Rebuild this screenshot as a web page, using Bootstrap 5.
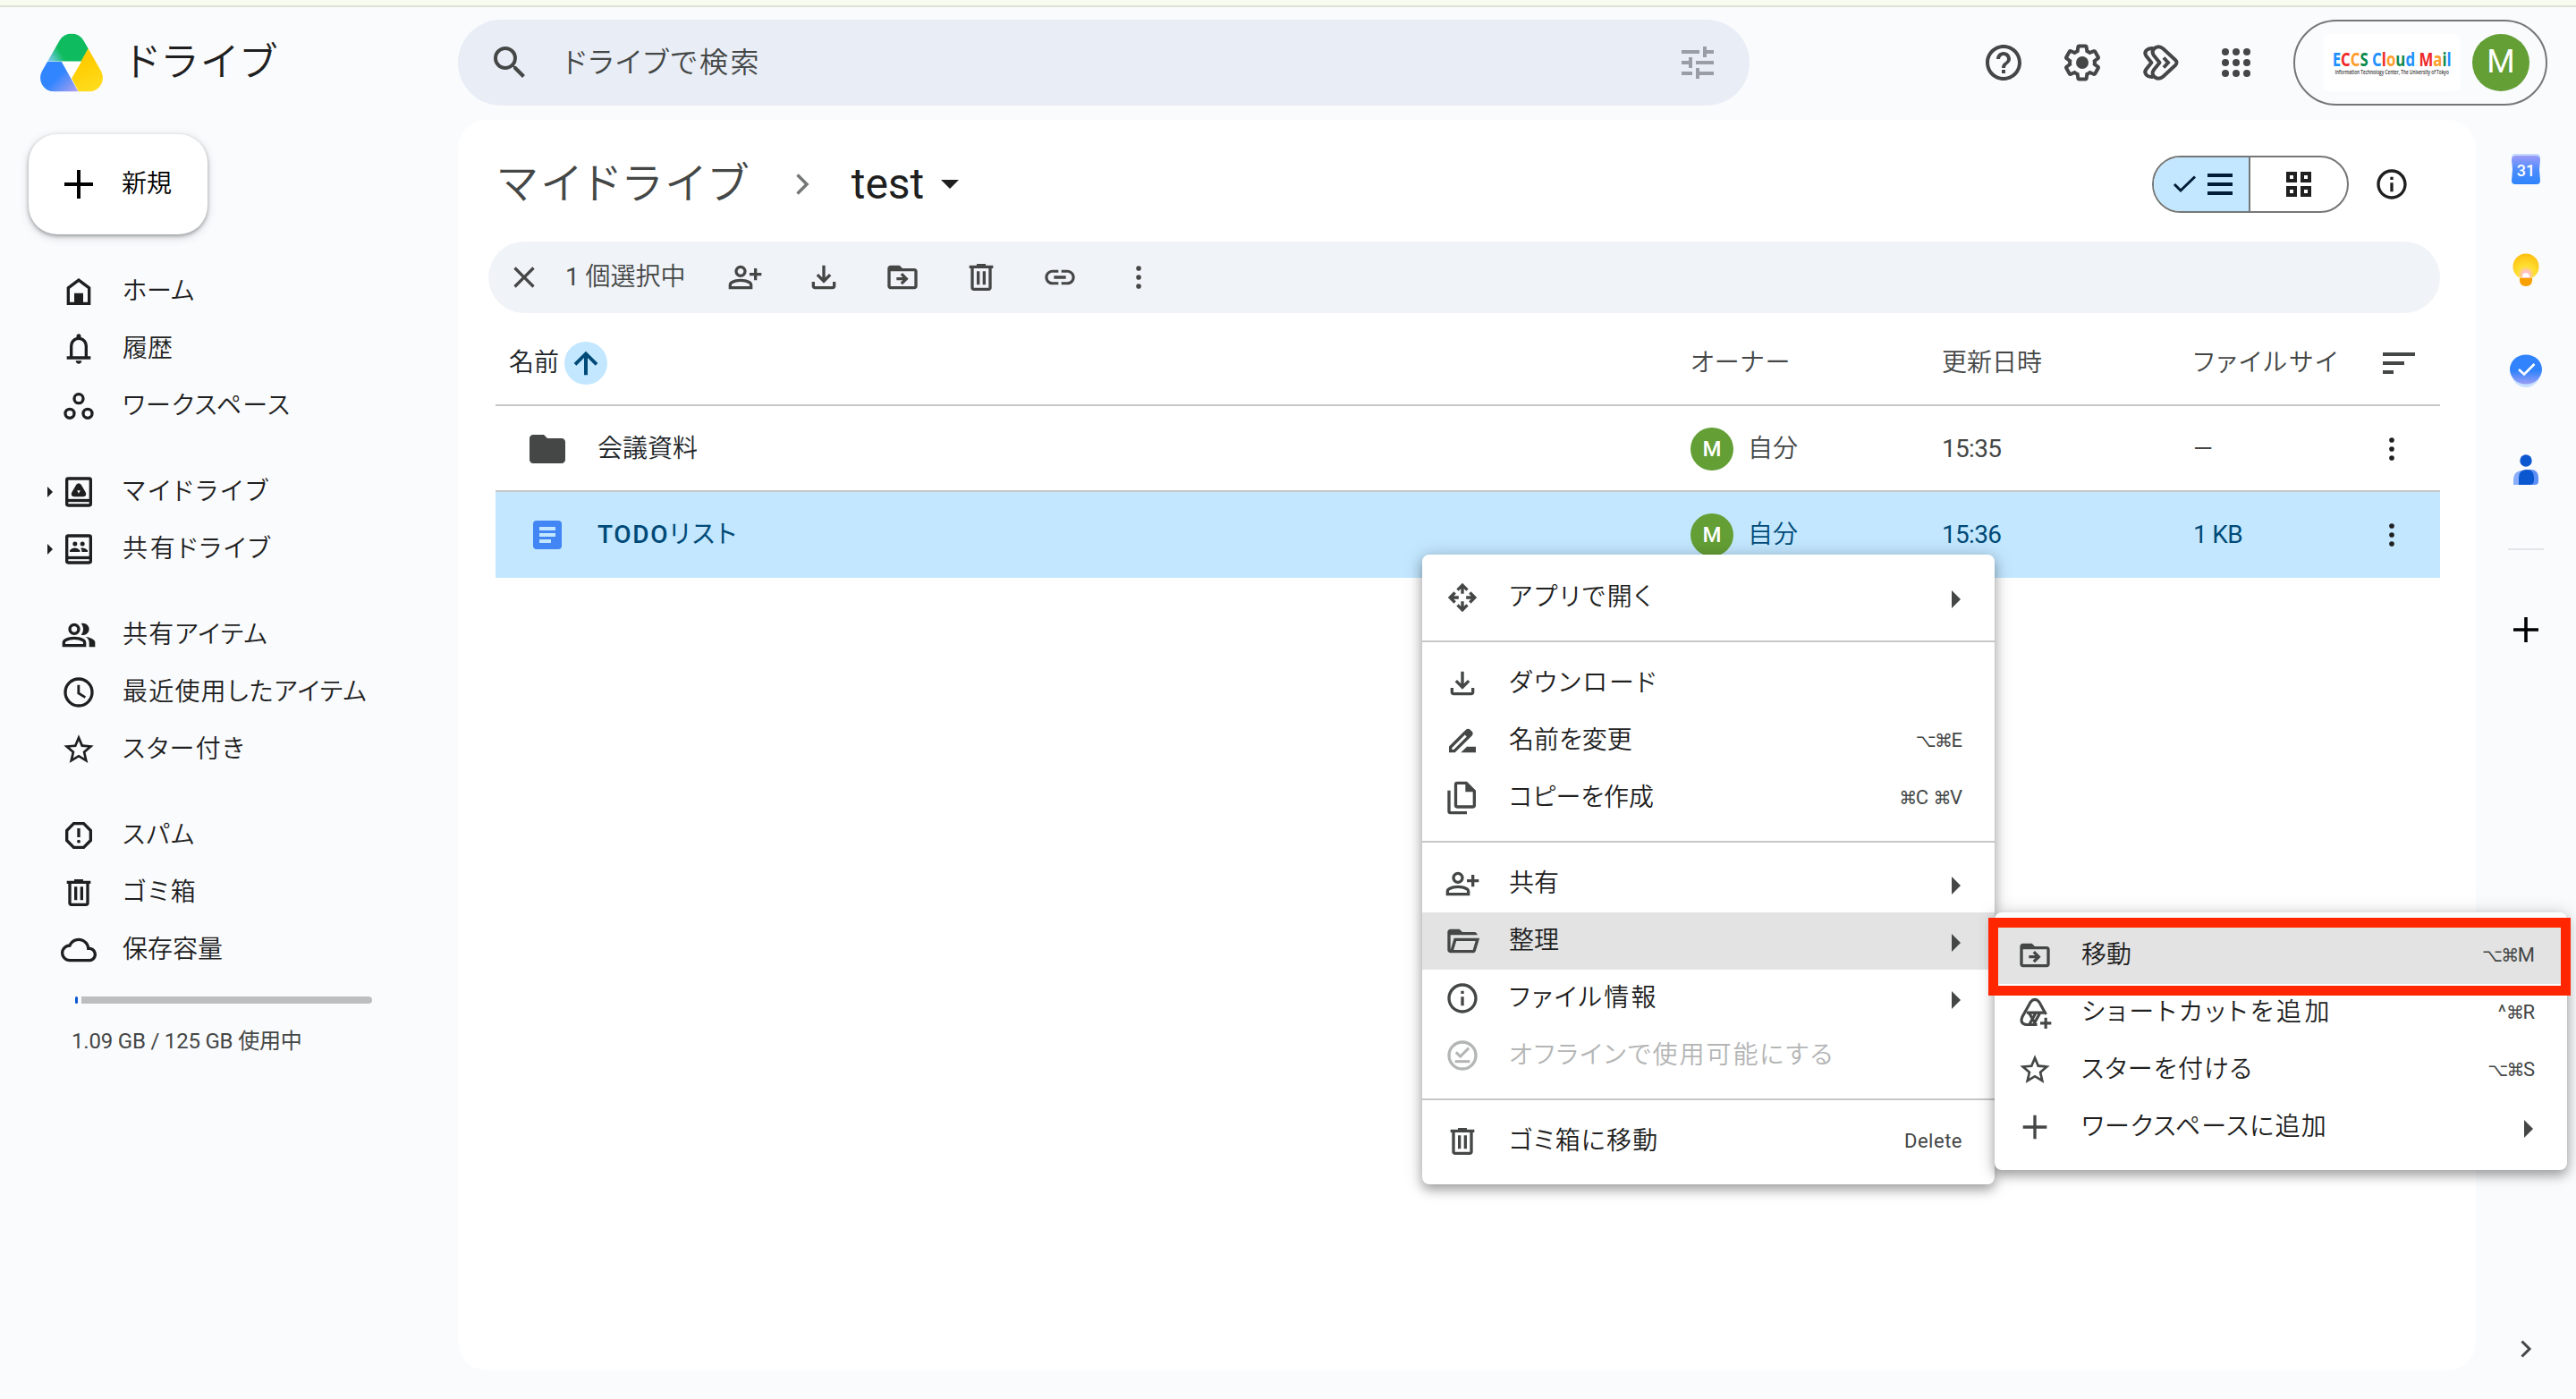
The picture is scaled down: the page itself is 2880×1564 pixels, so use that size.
<!DOCTYPE html>
<html lang="ja">
<head>
<meta charset="utf-8">
<title>test - ドライブ</title>
<link href="https://cdn.jsdelivr.net/npm/bootstrap@5.3.0/dist/css/bootstrap.min.css" rel="stylesheet">
<style>
:root{--ink:#1f1f1f;--sub:#444746;--line:#c7c7c7;--sel:#c2e7ff;--selink:#004a77}
body{width:2880px;height:1564px;overflow:hidden;background:#fafbfd;color:var(--ink);font-family:Roboto,"Noto Sans CJK JP",sans-serif;font-size:28px;line-height:1.2;position:relative}
svg{display:block;flex:none;fill:currentColor}
.i40{width:40px;height:40px}
.i48{width:48px;height:48px}
.kana{font-feature-settings:"palt"}
.jp{font-weight:350;white-space:nowrap}
/* tracking steps for kana runs */
.t1{letter-spacing:.043em}
.t2{letter-spacing:.055em}
.t3{letter-spacing:.082em}
.t4{letter-spacing:.094em}
.t5{letter-spacing:.12em}
.num{letter-spacing:-.7px}
.top-strip{height:8px;background:#f8fbf0;border-bottom:2px solid #dfe3d7}
.app-head{height:124px;margin-bottom:2px}
.brand-box{width:512px;padding-left:45px}
.brand-name{font-size:44px;margin-left:27px}
.search-box{width:1444px;height:96px;border-radius:48px;background:#e9edf6;padding:0 34px;color:var(--sub)}
.search-text{font-size:32px;margin-left:36px}
.search-tune{color:#9a9da3}
.head-icons{margin-left:260px;color:var(--sub);gap:40px}
.head-icons svg:last-child{margin-left:-4px}
.account-pill{width:284px;height:96px;border:2px solid #747775;border-radius:48px;margin-left:40px;padding-right:18px}
.org-logo{width:154px;height:64px;border-radius:8px;background:#fff;margin-right:13px}
.org-name{font:700 21px/20px "Open Sans",sans-serif;white-space:nowrap;transform:scaleX(.8)}
.org-sub{font:600 7px/9px "Open Sans",sans-serif;color:#333;white-space:nowrap;transform:scaleX(.675)}
.c-b{color:#1e90ff}.c-r{color:#f02a2a}.c-o{color:#ff9e2c}.c-g{color:#0c8a4a}
.face{border-radius:50%;background:#639f35;color:#fff;display:flex;align-items:center;justify-content:center;flex:none}
.face-lg{width:64px;height:64px;font-size:36px}
.face-sm{width:48px;height:48px;font-size:24px;font-weight:500}
.side-pane{width:512px;padding-top:16px}
.new-btn{width:200px;height:112px;margin-left:32px;border-radius:32px;background:#fff;border:0;padding-left:32px;box-shadow:0 2px 4px rgba(60,64,67,.45),0 3px 10px 2px rgba(60,64,67,.13)}
.new-btn span{margin-left:24px}
.side-nav{margin-top:32px}
.side-row{height:64px}
.side-row .tip{width:68px;padding-left:53px}
.side-row .lbl{margin-left:29px}
.side-gap{margin-top:32px}
.quota-bar{width:332px;height:8px;margin:20px 0 0 84px;gap:4px}
.quota-used{background:#0b57d0;border-radius:2px}
.quota-free{background:#bdbec0;border-radius:0 4px 4px 0}
.quota-text{margin:28px 0 0 80px;font-size:24px;color:var(--sub);letter-spacing:-.2px}
.main-pane{width:2256px;height:1398px;border-radius:32px;background:#fff;padding-top:8px}
.crumbs{height:128px;padding:0 74px 0 45px}
.crumb-a{font-size:48px;color:var(--sub)}
.crumb-b{font-size:48px}
.view-switch{width:220px;height:64px;border:2px solid #747775;border-radius:32px;overflow:hidden}
.view-on{width:108px;padding-left:3px;background:var(--sel);border-right:2px solid #747775;color:#001d35}
.sel-bar{width:2182px;height:80px;margin-left:34px;border-radius:40px;background:#f0f3f8;color:var(--sub);padding-left:20px}
.files{width:2174px;margin-left:42px}
.f-row{display:grid;grid-template-columns:1336px 281px 281px 162px 1fr;align-items:center;height:96px}
.f-head{height:104px;padding-top:9px;border-bottom:2px solid var(--line);color:var(--sub)}
.f-one{padding-top:2px;border-bottom:2px solid var(--line);color:var(--sub)}
.f-two{background:var(--sel);color:var(--selink)}
.sort-dot{width:48px;height:48px;border-radius:50%;background:var(--sel);color:var(--selink);margin-left:6px}
.rail{width:112px}
.rail-line{width:40px;height:2px;background:#e3e5e8}
.pop{position:absolute;width:640px;background:#fff;border-radius:8px;padding:16px 0;box-shadow:0 6px 12px rgba(0,0,0,.28),0 2px 20px 2px rgba(0,0,0,.16)}
.pop-a{left:1590px;top:620px}
.pop-b{left:2230px;top:1020px}
.pop-row{height:64px;padding:0 36px 0 25px}
.pop-row .lbl{margin-left:32px}
.pop-row svg.i40{color:var(--sub)}
.pop-on{background:#e3e3e3}
.pop-off,.pop-row.pop-off svg.i40{color:#b4b5b5}
.pop-rule{height:2px;background:var(--line);margin:16px 0 14px}
.keys{margin-left:auto;font-size:22px;color:var(--sub);font-family:Roboto,"DejaVu Sans",sans-serif}
.sym{font-size:20px;letter-spacing:-1.5px}
.tri{margin-left:auto;width:10px;height:20px;color:var(--sub);margin-right:2px;margin-top:4px}
.hot{position:absolute;left:2223px;top:1026px;width:651px;height:87px;border:11px solid #ff2600}
</style>
<script src="https://cdn.jsdelivr.net/npm/bootstrap@5.3.0/dist/js/bootstrap.bundle.min.js"></script>
</head>
<body>
<svg width="0" height="0" class="position-absolute">
<defs>
<symbol id="plus" viewBox="0 0 24 24"><path d="M11 4h2v7h7v2h-7v7h-2v-7H4v-2h7z"/></symbol>
<symbol id="home" viewBox="0 0 24 24"><path fill-rule="evenodd" d="M4 21V9l8-6 8 6v12zM6 19h3v-6h6v6h3v-9l-6-4.5L6 10z"/></symbol>
<symbol id="bell" viewBox="0 0 24 24"><path fill-rule="evenodd" d="M4 19v-2h2v-7q0-2.1 1.25-3.7T10.5 4.2v-.7q0-.6.45-1.05T12 2t1.05.45.45 1.05v.7q2 .5 3.25 2.1T18 10v7h2v2zM8 17h8v-7q0-1.65-1.175-2.825T12 6 9.175 7.175 8 10zM12 22q-.8 0-1.4-.6T10 20h4q0 .8-.6 1.4T12 22z"/></symbol>
<symbol id="spaces" viewBox="0 0 24 24"><g fill="none" stroke="currentColor" stroke-width="2"><circle cx="12" cy="7" r="3"/><circle cx="6" cy="17" r="3"/><circle cx="18" cy="17" r="3"/></g></symbol>
<symbol id="mydrive" viewBox="0 0 24 24"><rect x="4" y="3" width="16" height="18" rx="1" fill="none" stroke="currentColor" stroke-width="2"/><path d="M4 16.700h16v2H4z"/><path fill-rule="evenodd" d="M10.400 7q1.600-1.800 3.200 0l3 5.200q1.200 2.700-1.600 2.900H9q-2.800-.2-1.600-2.900zM10.900 11l1.100 2 1.100-2z"/></symbol>
<symbol id="shdrive" viewBox="0 0 24 24"><rect x="4" y="3" width="16" height="18" rx="1" fill="none" stroke="currentColor" stroke-width="2"/><path d="M4 16.700h16v2H4z"/><circle cx="9.500" cy="8.400" r="1.500"/><circle cx="14.500" cy="8.400" r="1.500"/><path d="M6 13.800v-1q1.300-1.700 3.400-1.700t3.400 1.700v1zM14 13.800v-1.300l-.8-1.200q3-.8 4.800 1.500v1z"/></symbol>
<symbol id="people" viewBox="0 0 24 24"><path fill-rule="evenodd" d="M1 20v-2.800q0-.85.44-1.560T2.600 14.550Q4.150 13.775 5.750 13.390T9 13t3.250.39 3.150 1.160q.73.38 1.160 1.090T17 17.200V20zM3 18h12v-.8q0-.275-.137-.5t-.363-.35Q13.150 15.675 11.775 15.337T9 15t-2.775.337T3.500 16.350q-.225.125-.363.350T3 17.200zM9 12q-1.650 0-2.825-1.175T5 8t1.175-2.825T9 4t2.825 1.175T13 8t-1.175 2.825T9 12zM9 10q.825 0 1.413-.587T11 8t-.587-1.413T9 6t-1.413.588T7 8t.588 1.413T9 10z"/><path d="M19 20v-3q0-1.100-.61-2.110T16.650 13.150q1.275.15 2.400.51t2.100.89q.9.5 1.375 1.110T23 17v3zM19 8q0 1.650-1.175 2.825T15 12q-.275 0-.7-.063T13.600 11.800q.675-.8 1.038-1.775T15 8t-.362-2.025T13.600 4.200q.35-.125.7-.163T15 4q1.650 0 2.825 1.175T19 8z"/></symbol>
<symbol id="clock" viewBox="0 0 24 24"><g fill="none" stroke="currentColor" stroke-width="2"><circle cx="12" cy="12" r="9"/><path d="M11.900 7v5.600l4.500 2.800" stroke-width="1.700"/></g></symbol>
<symbol id="star" viewBox="0 0 24 24"><path fill-rule="evenodd" d="M22 9.240l-7.190-.62L12 2 9.190 8.630 2 9.240l5.460 4.730L5.820 21 12 17.270 18.180 21l-1.630-7.030zM12 15.400l-3.760 2.270 1-4.280-3.320-2.880 4.380-.38L12 6.100l1.710 4.040 4.380.38-3.320 2.880 1 4.280z"/></symbol>
<symbol id="spam" viewBox="0 0 24 24"><path fill-rule="evenodd" d="M8.250 21L3 15.750v-7.500L8.250 3h7.500L21 8.250v7.500L15.750 21zM9.100 19h5.800l4.100-4.100V9.100L14.900 5H9.100L5 9.100v5.800z"/><path d="M11 7.200h2v6h-2z"/><circle cx="12" cy="16" r="1.150"/></symbol>
<symbol id="trash" viewBox="0 0 24 24"><path fill-rule="evenodd" d="M7 21q-.825 0-1.412-.587T5 19V6H4V4h5V3h6v1h5v2h-1v13q0 .825-.587 1.413T17 21zM17 6H7v13h10zM9 17h2V8H9zM13 17h2V8h-2z"/></symbol>
<symbol id="cloud" viewBox="0 0 24 24"><path fill-rule="evenodd" d="M19.350 10.040C18.670 6.590 15.640 4 12 4 9.110 4 6.600 5.640 5.350 8.040 2.340 8.360 0 10.910 0 14c0 3.310 2.690 6 6 6h13c2.760 0 5-2.240 5-5 0-2.640-2.050-4.780-4.650-4.960zM19 18H6c-2.210 0-4-1.790-4-4s1.790-4 4-4h.71C7.370 7.690 9.480 6 12 6c3.040 0 5.500 2.460 5.500 5.500v.5H19c1.660 0 3 1.340 3 3s-1.340 3-3 3z"/></symbol>
<symbol id="search" viewBox="0 0 24 24"><path d="M15.500 14h-.79l-.28-.27A6.470 6.470 0 0 0 16 9.500 6.500 6.500 0 1 0 9.500 16c1.610 0 3.090-.59 4.230-1.570l.27.28v.79l5 4.990L20.490 19l-4.990-5zm-6 0C7.010 14 5 11.990 5 9.500S7.010 5 9.500 5 14 7.010 14 9.500 11.990 14 9.500 14z"/></symbol>
<symbol id="tune" viewBox="0 0 24 24"><path d="M3 17v2h6v-2zM3 5v2h10V5zm10 16v-2h8v-2h-8v-2h-2v6zM7 9v2H3v2h4v2h2V9zm14 4v-2H11v2zm-6-4h2V7h4V5h-4V3h-2z"/></symbol>
<symbol id="help" viewBox="0 0 24 24"><path d="M11 18h2v-2h-2v2zm1-16C6.480 2 2 6.480 2 12s4.480 10 10 10 10-4.480 10-10S17.520 2 12 2zm0 18c-4.410 0-8-3.590-8-8s3.590-8 8-8 8 3.590 8 8-3.590 8-8 8zm0-14c-2.210 0-4 1.790-4 4h2c0-1.100.9-2 2-2s2 .9 2 2c0 2-3 1.750-3 5h2c0-2.250 3-2.500 3-5 0-2.210-1.790-4-4-4z"/></symbol>
<symbol id="gear" viewBox="0 0 24 24"><path d="M13.850 22.250h-3.700c-.74 0-1.360-.54-1.450-1.270l-.27-1.890c-.27-.14-.53-.29-.79-.46l-1.800.72c-.7.26-1.470-.03-1.810-.65L2.200 15.530c-.35-.66-.2-1.440.36-1.880l1.530-1.190c-.01-.15-.02-.3-.02-.46 0-.15.01-.31.02-.46l-1.520-1.190c-.59-.45-.74-1.260-.37-1.880l1.850-3.190c.34-.62 1.110-.9 1.790-.63l1.810.73c.26-.17.52-.32.78-.46l.27-1.910c.09-.7.710-1.250 1.440-1.250h3.700c.74 0 1.360.54 1.450 1.270l.27 1.890c.27.14.53.29.79.46l1.800-.72c.71-.26 1.480.03 1.820.65l1.840 3.180c.36.66.2 1.440-.36 1.880l-1.520 1.190c.01.15.02.3.02.46s-.01.31-.02.46l1.520 1.190c.56.45.72 1.230.37 1.860l-1.860 3.220c-.34.62-1.110.9-1.800.63l-1.800-.72c-.26.17-.52.32-.78.46l-.27 1.910c-.1.680-.72 1.220-1.460 1.220zm-3.230-2h2.760l.37-2.550.53-.22c.44-.18.88-.44 1.340-.78l.45-.34 2.380.96 1.380-2.400-2.030-1.580.07-.56c.03-.26.06-.51.06-.78s-.03-.53-.06-.78l-.07-.56 2.030-1.580-1.390-2.400-2.390.96-.45-.35c-.42-.32-.87-.58-1.330-.77l-.52-.22-.37-2.550h-2.760l-.37 2.550-.53.21c-.44.19-.88.44-1.340.79l-.45.33-2.380-.95-1.390 2.390 2.030 1.580-.07.56a7 7 0 0 0-.06.79c0 .26.02.53.06.78l.07.56-2.030 1.580 1.380 2.400 2.390-.96.45.35c.43.33.86.58 1.330.77l.53.22z"/><circle cx="12" cy="12" r="3.500"/></symbol>
<symbol id="flows" viewBox="0 0 48 48"><g fill="none" stroke="currentColor" stroke-width="4" stroke-linejoin="round" stroke-linecap="round"><path d="M26.500 8.500L40 21q3 3 0 6L26.500 39.500q-4.500 4-9 1-5-3.500-1.500-8.500l6.500-8-6.500-8q-3.500-5 1.500-8.500 4.500-3 9 1z"/><path d="M14.500 8q-4-.5-6.700 2.200-2.800 3-.4 6.300l6 7.500-6 7.500q-2.400 3.300.4 6.300 2.700 2.700 6.700 2.200"/><path d="M27 18.500l5 5.500-5 5.500" stroke-linecap="butt" stroke-linejoin="miter"/></g></symbol>
<symbol id="apps" viewBox="0 0 24 24"><circle cx="6" cy="6" r="2"/><circle cx="12" cy="6" r="2"/><circle cx="18" cy="6" r="2"/><circle cx="6" cy="12" r="2"/><circle cx="12" cy="12" r="2"/><circle cx="18" cy="12" r="2"/><circle cx="6" cy="18" r="2"/><circle cx="12" cy="18" r="2"/><circle cx="18" cy="18" r="2"/></symbol>
<symbol id="info" viewBox="0 0 24 24"><path d="M11 7h2v2h-2zm0 4h2v6h-2zm1-9C6.480 2 2 6.480 2 12s4.480 10 10 10 10-4.480 10-10S17.520 2 12 2zm0 18c-4.410 0-8-3.590-8-8s3.590-8 8-8 8 3.590 8 8-3.590 8-8 8z"/></symbol>
<symbol id="close" viewBox="0 0 24 24"><path d="M19 6.410L17.590 5 12 10.590 6.410 5 5 6.410 10.590 12 5 17.590 6.410 19 12 13.410 17.590 19 19 17.590 13.410 12z"/></symbol>
<symbol id="padd" viewBox="0 0 24 24"><path fill-rule="evenodd" d="M1 20v-2.800q0-.85.44-1.560T2.600 14.550Q4.150 13.775 5.750 13.390T9 13t3.250.39 3.150 1.160q.73.38 1.160 1.090T17 17.200V20zM3 18h12v-.8q0-.275-.137-.5t-.363-.35Q13.150 15.675 11.775 15.337T9 15t-2.775.337T3.500 16.350q-.225.125-.363.350T3 17.200zM9 12q-1.650 0-2.825-1.175T5 8t1.175-2.825T9 4t2.825 1.175T13 8t-1.175 2.825T9 12zM9 10q.825 0 1.413-.587T11 8t-.587-1.413T9 6t-1.413.588T7 8t.588 1.413T9 10z"/><path d="M18 14v-3h-3V9h3V6h2v3h3v2h-3v3z"/></symbol>
<symbol id="down" viewBox="0 0 24 24"><path d="M12 16L7 11l1.400-1.450L11 12.150V4h2v8.150l2.600-2.600L17 11zM6 20q-.825 0-1.412-.587T4 18v-3h2v3h12v-3h2v3q0 .825-.587 1.413T18 20z"/></symbol>
<symbol id="fmove" viewBox="0 0 24 24"><path fill-rule="evenodd" d="M20 6h-8l-2-2H4c-1.100 0-2 .9-2 2v12c0 1.100.9 2 2 2h16c1.100 0 2-.9 2-2V8c0-1.100-.9-2-2-2zM20 18H4V8h16z"/><path d="M12 17l4-4-4-4-1.410 1.410L12.170 12H8v2h4.170l-1.590 1.590z"/></symbol>
<symbol id="link" viewBox="0 0 24 24"><path d="M3.900 12c0-1.710 1.390-3.100 3.100-3.100h4V7H7c-2.760 0-5 2.240-5 5s2.240 5 5 5h4v-1.900H7c-1.710 0-3.100-1.390-3.100-3.100zM8 13h8v-2H8v2zm9-6h-4v1.900h4c1.710 0 3.100 1.390 3.100 3.100s-1.390 3.100-3.100 3.100h-4V17h4c2.760 0 5-2.240 5-5s-2.240-5-5-5z"/></symbol>
<symbol id="more" viewBox="0 0 24 24"><circle cx="12" cy="6" r="1.700"/><circle cx="12" cy="12" r="1.700"/><circle cx="12" cy="18" r="1.700"/></symbol>
<symbol id="sort" viewBox="0 0 24 24"><path d="M3 18h6v-2H3zM3 6v2h18V6zm0 7h12v-2H3z"/></symbol>
<symbol id="upar" viewBox="0 0 24 24"><path d="M4 12l1.600 1.600L10.800 8.400V20h2.400V8.400l5.200 5.200L20 12l-8-8z"/></symbol>
<symbol id="folder" viewBox="0 0 24 24"><path d="M10 4H4c-1.100 0-2 .9-2 2v12c0 1.100.9 2 2 2h16c1.100 0 2-.9 2-2V8c0-1.100-.9-2-2-2h-8z"/></symbol>
<symbol id="openw" viewBox="0 0 24 24"><g fill="none" stroke="currentColor" stroke-width="2"><path d="M12 9.500V4M8.700 7L12 3.700 15.300 7M12 14.500V20M8.700 17l3.300 3.300 3.300-3.300M9.500 12H4M7 8.700L3.700 12 7 15.300M14.500 12H20M17 8.700l3.300 3.300-3.300 3.300"/></g></symbol>
<symbol id="rename" viewBox="0 0 24 24"><path fill-rule="evenodd" d="M18.410 5.800L17.200 4.590c-.78-.78-2.050-.78-2.830 0l-2.680 2.680L3 15.960V20h4.040l8.740-8.740 2.630-2.630c.79-.78.79-2.050 0-2.830zM6.210 18H5v-1.210l8.660-8.660 1.210 1.210zM11 20l4-4h6v4z"/></symbol>
<symbol id="copy" viewBox="0 0 24 24"><path fill-rule="evenodd" d="M15 1H8.500a2 2 0 0 0-2 2v14a2 2 0 0 0 2 2H19a2 2 0 0 0 2-2V7zM8.500 17V3H14v5h5v9z"/><path d="M4 7H2v14a2 2 0 0 0 2 2h11v-2H4z"/></symbol>
<symbol id="fopen" viewBox="0 0 24 24"><path fill-rule="evenodd" d="M4 20q-.825 0-1.412-.587T2 18V6q0-.825.588-1.412T4 4h6l2 2h8q.825 0 1.413.588T22 8H4v10l2.400-8h17.100l-2.575 8.575q-.2.650-.737 1.038T19 20zM6.100 18H19l1.800-6H7.900z"/></symbol>
<symbol id="offl" viewBox="0 0 24 24"><g fill="none" stroke="currentColor" stroke-width="2"><circle cx="12" cy="12" r="9"/><path d="M7 16h10" stroke-width="1.800"/><path d="M7.700 9.800l2.900 2.900 5.700-5.700" stroke-width="1.800"/></g></symbol>
<symbol id="shortcut" viewBox="0 0 24 24"><g fill="none" stroke="currentColor" stroke-width="1.900"><path d="M19.500 13.200L14.900 5q-2.900-3.500-5.800 0L3.500 15q-1.700 4.700 2.900 5.100H13.500"/><path d="M6.500 12.100H18M8.200 12.400l4.200 7.300M8.300 20l4.200-7.500M12 18.500l3.200-5.800"/><path d="M19.300 15.500v7.300M15.600 19.100H23"/></g></symbol>
<symbol id="tri" viewBox="0 0 10 20"><path d="M0 0l10 10L0 20z"/></symbol>
</defs>
</svg>

<div class="top-strip"></div>
<header class="app-head d-flex align-items-center">
  <div class="brand-box d-flex align-items-center">
    <svg width="70" height="66" viewBox="45 36.500 70 66">
      <defs>
        <clipPath id="hull"><path d="M66.600 44.750A15.500 15.500 0 0 1 93.400 44.750L112.900 78.750A15.500 15.500 0 0 1 99.500 102H60.500A15.500 15.500 0 0 1 47.100 78.750Z"/></clipPath>
        <linearGradient id="lg" x1="52" y1="68" x2="68" y2="58" gradientUnits="userSpaceOnUse"><stop offset="0" stop-color="#7cc4ff"/><stop offset=".4" stop-color="#5ec6c8"/><stop offset="1" stop-color="#0ebc5f"/></linearGradient>
        <linearGradient id="lb" x1="66" y1="84" x2="84" y2="102" gradientUnits="userSpaceOnUse"><stop offset="0" stop-color="#3186ff"/><stop offset="1" stop-color="#a9a0f0"/></linearGradient>
        <linearGradient id="ly" x1="90" y1="70" x2="104" y2="102" gradientUnits="userSpaceOnUse"><stop offset="0" stop-color="#ffcc00"/><stop offset="1" stop-color="#ffdd1f"/></linearGradient>
      </defs>
      <g clip-path="url(#hull)"><path fill="url(#lg)" d="M40 68h51l9-16V30H60z"/><path fill="url(#lb)" d="M40 68.500h29L88 103H40z"/><path fill="url(#ly)" d="M99 53L80 87l8.500 16H120V53z"/><path fill="#fff" d="M69 68.500h22L80 87z"/></g>
    </svg>
    <span class="brand-name jp kana t5">ドライブ</span>
  </div>
  <div class="search-box d-flex align-items-center">
    <svg class="i48"><use href="#search"/></svg>
    <span class="search-text jp kana t3">ドライブで検索</span>
    <svg class="i48 ms-auto search-tune"><use href="#tune"/></svg>
  </div>
  <div class="head-icons d-flex align-items-center">
    <svg class="i48"><use href="#help"/></svg>
    <svg class="i48"><use href="#gear"/></svg>
    <svg class="i48"><use href="#flows"/></svg>
    <svg class="i48"><use href="#apps"/></svg>
  </div>
  <div class="account-pill d-flex align-items-center justify-content-end">
    <div class="org-logo d-flex flex-column align-items-center justify-content-center">
      <div class="org-name"><span class="c-b">E</span><span class="c-r">C</span><span class="c-o">C</span><span class="c-g">S</span> <span class="c-b">C</span><span class="c-r">l</span><span class="c-o">o</span><span class="c-g">u</span><span class="c-b">d</span> <span class="c-r">M</span><span class="c-o">a</span><span class="c-g">i</span><span class="c-b">l</span></div>
      <div class="org-sub">Information Technology Center, The University of Tokyo</div>
    </div>
    <div class="face face-lg">M</div>
  </div>
</header>

<div class="d-flex">
  <aside class="side-pane">
    <button class="new-btn d-flex align-items-center"><svg class="i48"><use href="#plus"/></svg><span class="jp">新規</span></button>
    <nav class="side-nav">
      <div class="side-row d-flex align-items-center"><span class="tip"></span><svg class="i40"><use href="#home"/></svg><span class="lbl jp kana">ホーム</span></div>
      <div class="side-row d-flex align-items-center"><span class="tip"></span><svg class="i40"><use href="#bell"/></svg><span class="lbl jp">履歴</span></div>
      <div class="side-row d-flex align-items-center"><span class="tip"></span><svg class="i40"><use href="#spaces"/></svg><span class="lbl jp kana t1">ワークスペース</span></div>
      <div class="side-row side-gap d-flex align-items-center"><span class="tip"><svg width="6" height="12"><use href="#tri"/></svg></span><svg class="i40"><use href="#mydrive"/></svg><span class="lbl jp kana t5">マイドライブ</span></div>
      <div class="side-row d-flex align-items-center"><span class="tip"><svg width="6" height="12"><use href="#tri"/></svg></span><svg class="i40"><use href="#shdrive"/></svg><span class="lbl jp kana t4">共有ドライブ</span></div>
      <div class="side-row side-gap d-flex align-items-center"><span class="tip"></span><svg class="i40"><use href="#people"/></svg><span class="lbl jp kana t1">共有アイテム</span></div>
      <div class="side-row d-flex align-items-center"><span class="tip"></span><svg class="i40"><use href="#clock"/></svg><span class="lbl jp kana t1">最近使用したアイテム</span></div>
      <div class="side-row d-flex align-items-center"><span class="tip"></span><svg class="i40"><use href="#star"/></svg><span class="lbl jp kana t2">スター付き</span></div>
      <div class="side-row side-gap d-flex align-items-center"><span class="tip"></span><svg class="i40"><use href="#spam"/></svg><span class="lbl jp kana t1">スパム</span></div>
      <div class="side-row d-flex align-items-center"><span class="tip"></span><svg class="i40"><use href="#trash"/></svg><span class="lbl jp kana t3">ゴミ箱</span></div>
      <div class="side-row d-flex align-items-center"><span class="tip"></span><svg class="i40"><use href="#cloud"/></svg><span class="lbl jp">保存容量</span></div>
    </nav>
    <div class="quota-bar d-flex"><div class="quota-used" style="width:0.9%"></div><div class="quota-free flex-fill"></div></div>
    <div class="quota-text">1.09 GB / 125 GB 使用中</div>
  </aside>

  <main class="main-pane">
    <div class="crumbs d-flex align-items-center">
      <span class="crumb-a jp kana t5">マイドライブ</span>
      <svg width="16" height="24" viewBox="0 0 16 24" style="margin-left:48px;color:#747775"><path d="M2.500 1.500L13 12 2.500 22.500" fill="none" stroke="currentColor" stroke-width="3.500"/></svg>
      <span class="crumb-b" style="margin-left:47px">test</span>
      <svg width="20" height="10" viewBox="0 0 20 10" style="margin-left:19px"><path d="M0 0h20L10 10z"/></svg>
      <div class="view-switch d-flex ms-auto">
        <div class="view-on d-flex align-items-center justify-content-center">
          <svg width="68" height="24" viewBox="0 0 68 24"><path d="M2 12l7 7L25 3.500" fill="none" stroke="currentColor" stroke-width="3"/><path d="M39 0h28v4H39zM39 10h28v4H39zM39 20h28v4H39z"/></svg>
        </div>
        <div class="flex-fill d-flex align-items-center justify-content-center">
          <svg width="28" height="28" viewBox="0 0 28 28"><g fill="none" stroke="currentColor" stroke-width="4"><rect x="2" y="2" width="8" height="8"/><rect x="18" y="2" width="8" height="8"/><rect x="2" y="18" width="8" height="8"/><rect x="18" y="18" width="8" height="8"/></g></svg>
        </div>
      </div>
      <svg class="i40" style="margin-left:28px"><use href="#info"/></svg>
    </div>

    <div class="sel-bar d-flex align-items-center">
      <svg class="i40"><use href="#close"/></svg>
      <span class="jp" style="margin:0 46px 0 26px"><span class="fw-normal">1</span> 個選択中</span>
      <div class="d-flex" style="gap:48px">
        <svg class="i40"><use href="#padd"/></svg><svg class="i40"><use href="#down"/></svg><svg class="i40"><use href="#fmove"/></svg><svg class="i40"><use href="#trash"/></svg><svg class="i40"><use href="#link"/></svg><svg class="i40"><use href="#more"/></svg>
      </div>
    </div>

    <section class="files">
      <div class="f-row f-head">
        <div class="d-flex align-items-center" style="padding-left:15px"><span class="jp text-dark">名前</span><span class="sort-dot d-flex align-items-center justify-content-center"><svg class="i40"><use href="#upar"/></svg></span></div>
        <div class="jp kana t1">オーナー</div>
        <div class="jp">更新日時</div>
        <div class="jp kana t4">ファイルサイ</div>
        <svg class="i48" style="margin-left:44px"><use href="#sort"/></svg>
      </div>
      <div class="f-row f-one">
        <div class="d-flex align-items-center"><svg class="i48" style="margin:0 32px 0 34px"><use href="#folder"/></svg><span class="jp text-dark">会議資料</span></div>
        <div class="d-flex align-items-center"><span class="face face-sm">M</span><span class="jp" style="margin-left:16px">自分</span></div>
        <div class="num">15:35</div>
        <div>—</div>
        <svg class="i40" style="margin-left:40px;color:#1f1f1f"><use href="#more"/></svg>
      </div>
      <div class="f-row f-two">
        <div class="d-flex align-items-center"><svg width="32" height="32" style="margin:0 40px 0 42px"><rect width="32" height="32" rx="4" fill="#4285f4"/><path fill="#c2e7ff" d="M7 7h18v4H7zM7 14h18v4H7zM7 21h13v4H7z"/></svg><span class="jp kana t4" style="font-weight:500"><span style="letter-spacing:.06em">TODO</span><span class="fw-normal">リスト</span></span></div>
        <div class="d-flex align-items-center"><span class="face face-sm">M</span><span class="jp" style="margin-left:16px">自分</span></div>
        <div class="num">15:36</div>
        <div class="num">1 KB</div>
        <svg class="i40" style="margin-left:40px;color:#1f1f1f"><use href="#more"/></svg>
      </div>
    </section>
  </main>

  <aside class="rail d-flex flex-column align-items-center">
    <svg width="32" height="36" viewBox="0 0 32 36" style="margin-top:37px"><defs><linearGradient id="cal" x1="0" y1="0" x2="0" y2="1"><stop offset="0" stop-color="#9a9cf8"/><stop offset=".5" stop-color="#4c8dff"/><stop offset="1" stop-color="#2f84fb"/></linearGradient></defs><path fill="#c5dcfd" d="M4 1h24q4 0 4 4v4H0V5q0-4 4-4z"/><path fill="url(#cal)" d="M5 3h22q5 0 5 5l-1 10 1 13q0 4-4 4H4q-4 0-4-4l1-13L0 8q0-5 5-5z"/><text x="16" y="26" font-family="Roboto" font-size="18" font-weight="500" fill="#fff" text-anchor="middle">31</text></svg>
    <svg width="30" height="38" viewBox="0 0 30 38" style="margin-top:76px"><defs><radialGradient id="kp" cx=".5" cy=".8" r=".8"><stop offset=".15" stop-color="#ffc0c8"/><stop offset=".4" stop-color="#ffe030"/><stop offset="1" stop-color="#ffbe10"/></radialGradient></defs><circle cx="15" cy="15" r="14.500" fill="url(#kp)"/><path fill="#fff" d="M11 27q0-5 4-5t4 5z"/><path fill="#f8a000" d="M8 28h14v2q0 7-7 7t-7-7z"/></svg>
    <svg width="36" height="38" viewBox="0 0 36 38" style="margin-top:75px"><defs><linearGradient id="tk" x1="0" y1="0" x2="0" y2="1"><stop offset=".55" stop-color="#3083fc"/><stop offset="1" stop-color="#9c9ef5"/></linearGradient></defs><circle cx="18" cy="21" r="16" fill="#c5e0ff"/><ellipse cx="18" cy="17" rx="18" ry="16.500" fill="url(#tk)"/><path d="M10 17l6 5.500L27.500 11" fill="none" stroke="#fff" stroke-width="2.600"/></svg>
    <svg width="30" height="34" viewBox="0 0 30 34" style="margin-top:74px"><path fill="#8aaefa" d="M1 34v-5q0-11 11-11h8v16z"/><path fill="#5e8ff5" d="M14 17h6q9 0 9 9v4q0 4-4 4H14z"/><path fill="#0b57d0" d="M7 34v-8q0-9 9-9 8 0 8 9v3q0 5-5 5z"/><circle cx="15" cy="7" r="6.700" fill="#0b57d0"/></svg>
    <div class="rail-line" style="margin-top:71px"></div>
    <svg width="28" height="28" viewBox="0 0 28 28" style="margin-top:75px"><path d="M14 0v28M0 14h28" stroke="#000" stroke-width="3.600"/></svg>
    <svg width="14" height="20" viewBox="0 0 14 20" style="margin-top:780px;color:#444746"><path d="M2.500 1.500L11 10l-8.500 8.500" fill="none" stroke="currentColor" stroke-width="3"/></svg>
  </aside>
</div>

<div class="pop pop-a">
  <div class="pop-row d-flex align-items-center"><svg class="i40"><use href="#openw"/></svg><span class="lbl jp kana t3">アプリで開く</span><svg class="tri"><use href="#tri"/></svg></div>
  <div class="pop-rule"></div>
  <div class="pop-row d-flex align-items-center"><svg class="i40"><use href="#down"/></svg><span class="lbl jp kana t3">ダウンロード</span></div>
  <div class="pop-row d-flex align-items-center"><svg class="i40"><use href="#rename"/></svg><span class="lbl jp kana">名前を変更</span><span class="keys"><span class="sym">⌥⌘</span>E</span></div>
  <div class="pop-row d-flex align-items-center"><svg class="i40"><use href="#copy"/></svg><span class="lbl jp kana">コピーを作成</span><span class="keys"><span class="sym">⌘</span>C <span class="sym">⌘</span>V</span></div>
  <div class="pop-rule"></div>
  <div class="pop-row d-flex align-items-center"><svg class="i40"><use href="#padd"/></svg><span class="lbl jp">共有</span><svg class="tri"><use href="#tri"/></svg></div>
  <div class="pop-row pop-on d-flex align-items-center"><svg class="i40"><use href="#fopen"/></svg><span class="lbl jp">整理</span><svg class="tri"><use href="#tri"/></svg></div>
  <div class="pop-row d-flex align-items-center"><svg class="i40"><use href="#info"/></svg><span class="lbl jp kana t3">ファイル情報</span><svg class="tri"><use href="#tri"/></svg></div>
  <div class="pop-row pop-off d-flex align-items-center"><svg class="i40"><use href="#offl"/></svg><span class="lbl jp kana" style="letter-spacing:.07em">オフラインで使用可能にする</span></div>
  <div class="pop-rule"></div>
  <div class="pop-row d-flex align-items-center"><svg class="i40"><use href="#trash"/></svg><span class="lbl jp kana t1">ゴミ箱に移動</span><span class="keys" style="letter-spacing:.5px">Delete</span></div>
</div>

<div class="pop pop-b">
  <div class="pop-row pop-on d-flex align-items-center"><svg class="i40"><use href="#fmove"/></svg><span class="lbl jp">移動</span><span class="keys"><span class="sym">⌥⌘</span>M</span></div>
  <div class="pop-row d-flex align-items-center"><svg class="i40"><use href="#shortcut"/></svg><span class="lbl jp kana t5">ショートカットを追加</span><span class="keys">^<span class="sym">⌘</span>R</span></div>
  <div class="pop-row d-flex align-items-center"><svg class="i40"><use href="#star"/></svg><span class="lbl jp kana t1">スターを付ける</span><span class="keys"><span class="sym">⌥⌘</span>S</span></div>
  <div class="pop-row d-flex align-items-center"><svg class="i40"><use href="#plus"/></svg><span class="lbl jp kana t1">ワークスペースに追加</span><svg class="tri"><use href="#tri"/></svg></div>
</div>
<div class="hot"></div>
</body>
</html>
